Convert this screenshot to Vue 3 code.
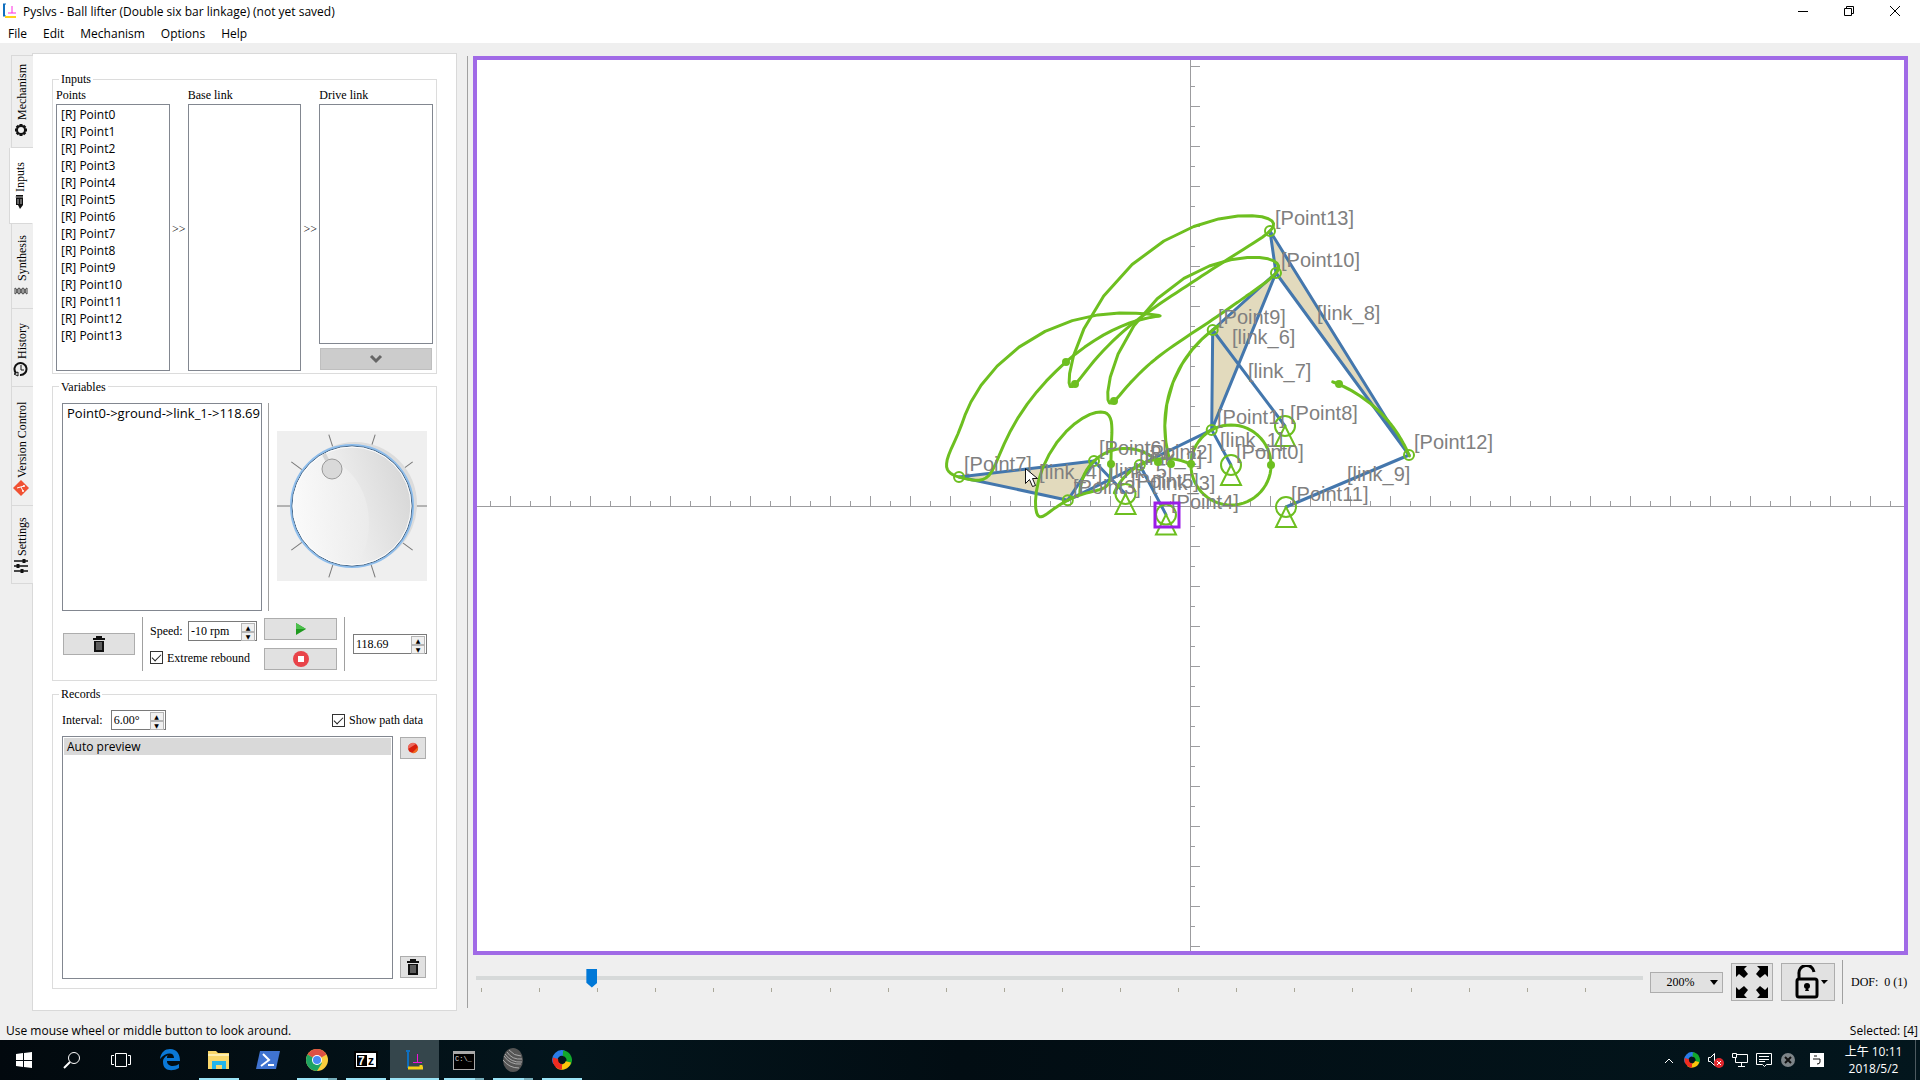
<script setup>
import { ref } from 'vue'

const menus = ['File', 'Edit', 'Mechanism', 'Options', 'Help']
const tabs = [
  { name: 'Mechanism', icon: 'gear', size: 93 },
  { name: 'Inputs', icon: 'pen', size: 76, active: true },
  { name: 'Synthesis', icon: 'dna', size: 85 },
  { name: 'History', icon: 'clock', size: 78 },
  { name: 'Version Control', icon: 'git', size: 119 },
  { name: 'Settings', icon: 'sliders', size: 78 },
]

const rebound = ref(true)
const showPath = ref(true)
const zoomLevel = ref(200)
const speed = ref('-10 rpm')
const angle = ref('118.69')
const interval = ref('6.00°')

const dialTicks = [0, 36, 72, 108, 144, 180, 216, 252, 288, 324]

/* ---- linkage ---- */
const points = [
  [1231, 465], [1211.7, 429.9], [1139.8, 465], [1067.8, 500.2], [1166, 514.6],
  [1125.5, 494], [1094, 461], [959, 477], [1285, 426], [1212.7, 330],
  [1276, 273], [1286, 507], [1409, 455], [1270, 231],
]
const fixed = [0, 4, 5, 8, 11]
const moving = [1, 2, 3, 6, 7, 9, 10, 12, 13]
const links = [
  [0, 1], [1, 2, 3], [2, 4], [3, 6, 7], [6, 5], [1, 9, 10], [9, 8], [10, 12, 13], [12, 11],
]
const linkShapes = links.map((ids, i) => {
  const c = ids.map((k) => points[k])
  return {
    name: `[link_${i + 1}]`,
    poly: c.map((p) => p.join(',')).join(' '),
    x: Math.round(c.reduce((s, p) => s + p[0], 0) / c.length),
    y: Math.round(c.reduce((s, p) => s + p[1], 0) / c.length),
  }
})

const dist = (a, b) => Math.hypot(a[0] - b[0], a[1] - b[1])
const side = (a, b, c) => Math.sign((b[0] - a[0]) * (c[1] - a[1]) - (b[1] - a[1]) * (c[0] - a[0]))

/* third joint of a two-bar chain a - c - b */
function dyad(pos, a, b, c) {
  const ra = dist(points[a], points[c])
  const rb = dist(points[b], points[c])
  const s = side(points[a], points[b], points[c])
  const [A, B] = [pos[a], pos[b]]
  const d = dist(A, B)
  const t = (ra * ra - rb * rb + d * d) / (2 * d)
  const h = Math.sqrt(Math.max(0, ra * ra - t * t))
  const ux = (B[0] - A[0]) / d
  const uy = (B[1] - A[1]) / d
  pos[c] = [A[0] + ux * t - uy * h * s, A[1] + uy * t + ux * h * s]
}

/* joint c carried by the rigid link through a and b */
function rigid(pos, a, b, c) {
  const [a0, b0, c0] = [points[a], points[b], points[c]]
  const turn =
    Math.atan2(pos[b][1] - pos[a][1], pos[b][0] - pos[a][0]) -
    Math.atan2(b0[1] - a0[1], b0[0] - a0[0])
  const x = c0[0] - a0[0]
  const y = c0[1] - a0[1]
  pos[c] = [
    pos[a][0] + x * Math.cos(turn) - y * Math.sin(turn),
    pos[a][1] + x * Math.sin(turn) + y * Math.cos(turn),
  ]
}

function solve(deg) {
  const pos = points.map((p) => [...p])
  const r = dist(points[0], points[1])
  const rad = (deg * Math.PI) / 180
  pos[1] = [pos[0][0] + r * Math.cos(rad), pos[0][1] - r * Math.sin(rad)]
  dyad(pos, 1, 4, 2)
  rigid(pos, 1, 2, 3)
  dyad(pos, 3, 5, 6)
  rigid(pos, 3, 6, 7)
  dyad(pos, 1, 8, 9)
  rigid(pos, 1, 9, 10)
  dyad(pos, 10, 11, 12)
  rigid(pos, 10, 12, 13)
  return pos
}
const frames = Array.from({ length: 61 }, (_, i) => solve(i * 6))
const paths = moving.map((k) => ({
  line: frames.map((f) => f[k].map((v) => v.toFixed(1)).join(',')).join(' '),
  start: frames[0][k].map(Math.round),
}))

const origin = [1190, 506]
const xTicks = Array.from({ length: 71 }, (_, i) => i - 35).filter((i) => i)
const yTicks = Array.from({ length: 45 }, (_, i) => i - 22).filter((i) => i)
</script>

<template>
  <div class="window">
    <header class="titlebar">
      <svg class="app-icon" width="16" height="16" viewBox="0 0 16 16">
        <path d="M2 1v12" stroke="#0f6fbf" stroke-width="2" /><path d="M1 1h3M1 13h3" stroke="#0f6fbf" />
        <path d="M3 14h11" stroke="#ffd21a" stroke-width="2" /><path d="M6 10h8M10 3v7" stroke="#ff2be0" fill="none" />
      </svg>
      <span class="title">Pyslvs - Ball lifter (Double six bar linkage) (not yet saved)</span>
      <button class="win" aria-label="Minimize"><svg width="10" height="10"><path d="M0 5.500h10" stroke="#000" /></svg></button>
      <button class="win" aria-label="Restore"><svg width="10" height="10" fill="none" stroke="#000"><path d="M.5 2.500h7v7h-7zM2.500 2.500v-2h7v7h-2" /></svg></button>
      <button class="win" aria-label="Close"><svg width="10" height="10" stroke="#000"><path d="M0 0l10 10M10 0L0 10" /></svg></button>
    </header>
    <nav class="menubar">
      <button v-for="m in menus" :key="m">{{ m }}</button>
    </nav>

    <main class="work">
      <div class="tabs" role="tablist">
        <button v-for="t in tabs" :key="t.name" class="tab" :class="{ active: t.active }" role="tab" :style="{ height: t.size + 'px' }">
          <svg width="16" height="16" viewBox="0 0 16 16">
            <g v-if="t.icon === 'gear'" fill="none" stroke="#111"><circle cx="8" cy="8" r="4" stroke-width="2" /><path d="M8 2v2M8 12v2M2 8h2M12 8h2M3.800 3.800l1.400 1.400M10.800 10.800l1.400 1.400M12.200 3.800l-1.400 1.400M5.200 10.800l-1.400 1.400" stroke-width="3" /></g>
            <g v-else-if="t.icon === 'pen'"><path d="M4 1h7v10l-3 4-2-4H4z" fill="#111" /><path d="M3 3h8M6 5v5M9 5v5" stroke="#bbb" /></g>
            <g v-else-if="t.icon === 'dna'" fill="none" stroke="#444"><path d="M2 5c2 0 2 6 4 6s2-6 4-6 2 6 4 6M2 11c2 0 2-6 4-6s2 6 4 6 2-6 4-6M2 5v6M6 5v6M10 5v6M14 5v6" /></g>
            <g v-else-if="t.icon === 'clock'" fill="none" stroke="#111"><path d="M3 12a6 6 0 1 1 4 2" stroke-width="2" /><path d="M8 4v5h3M1 13l4-2v4z" /></g>
            <g v-else-if="t.icon === 'git'"><path d="M8 0l8 8-8 8-8-8z" fill="#f05133" /><path d="M4 8l7-2M8 7l2 4" stroke="#fff" /><circle cx="11" cy="6" r="1" fill="#fff" /><circle cx="10" cy="11" r="1" fill="#fff" /></g>
            <g v-else stroke="#111" stroke-width="2"><path d="M1 3h14M1 8h14M1 13h14" stroke-width="1.500" /><path d="M11 1v4M5 6v4M9 11v4" stroke-width="3" /></g>
          </svg>
          <span>{{ t.name }}</span>
        </button>
      </div>

      <section class="panel">
        <fieldset class="group inputs">
          <legend>Inputs</legend>
          <div class="trio">
            <div class="col">
              <span>Points</span>
              <ul class="list fill"><li v-for="i in 14" :key="i">[R] Point{{ i - 1 }}</li></ul>
            </div>
            <span class="arrows">&gt;&gt;</span>
            <div class="col"><span>Base link</span><ul class="list fill"></ul></div>
            <span class="arrows">&gt;&gt;</span>
            <div class="col">
              <span>Drive link</span>
              <ul class="list fill"></ul>
              <button class="btn down" disabled aria-label="Add"><svg width="14" height="10"><path d="M2 2l5 5 5-5" fill="none" stroke="#666" stroke-width="3" /></svg></button>
            </div>
          </div>
        </fieldset>

        <fieldset class="group padded">
          <legend>Variables</legend>
          <div class="var-top">
            <ul class="list vars"><li>Point0-&gt;ground-&gt;link_1-&gt;118.69</li></ul>
            <i class="vline"></i>
            <div class="dial-wrap">
              <svg class="dial" width="150" height="150" viewBox="0 0 150 150">
                <defs>
                  <linearGradient id="knob" x1="0" y1=".6" x2="1" y2=".3"><stop offset="0" stop-color="#fff" /><stop offset="1" stop-color="#d6d6d6" /></linearGradient>
                  <linearGradient id="shine" x1="0" y1=".5" x2="1" y2=".5"><stop offset="0" stop-color="#fff" /><stop offset="1" stop-color="#ececec" /></linearGradient>
                  <clipPath id="face"><circle cx="75" cy="75" r="59" /></clipPath>
                </defs>
                <rect width="150" height="150" fill="#efefef" />
                <path v-for="a in dialTicks" :key="a" d="M137 75h13" stroke="#777" :transform="`rotate(${a} 75 75)`" />
                <circle cx="78" cy="73" r="62" fill="#dcdcdc" />
                <circle cx="75" cy="75" r="61" fill="url(#knob)" stroke="#8dbdec" stroke-width="2" />
                <circle cx="75" cy="75" r="60" fill="none" stroke="#46688a" />
                <ellipse cx="38" cy="92" rx="54" ry="66" fill="url(#shine)" clip-path="url(#face)" opacity=".8" />
                <circle cx="75" cy="75" r="59" fill="none" stroke="#fff" />
                <path d="M47 23l3 6" stroke="#d4d4d4" stroke-width="4" />
                <circle cx="55" cy="38" r="10" fill="#d9d9d9" stroke="#999" />
              </svg>
            </div>
          </div>
          <div class="var-bottom">
            <button class="btn trash" aria-label="Delete variable">
              <svg width="12" height="16" viewBox="0 0 12 16"><path d="M0 3h12M4 2V1h4v1" fill="none" stroke="#111" stroke-width="2" /><path d="M1 5h10v11H1z" fill="#111" /><path d="M4 6v8M6 6v8M8 6v8" stroke="#aaa" /></svg>
            </button>
            <i class="vline"></i>
            <div class="speed">
              <label for="speed">Speed:</label>
              <span class="spin w69"><input id="speed" v-model="speed" /><span class="steps"><button aria-label="Faster">▲</button><button aria-label="Slower">▼</button></span></span>
              <label class="check wide"><input v-model="rebound" type="checkbox" />Extreme rebound</label>
            </div>
            <div class="play">
              <button class="btn" aria-label="Play"><svg width="12" height="14"><path d="M1 1l10 6-10 6z" fill="#1e9a1e" /><path d="M1 1l10 6H1z" fill="#4cc04c" /></svg></button>
              <button class="btn" aria-label="Stop"><svg width="16" height="16"><circle cx="8" cy="8" r="8" fill="#e8444a" /><rect x="5" y="5" width="6" height="6" fill="#fff" /></svg></button>
            </div>
            <i class="vline"></i>
            <span class="spin w74"><input v-model="angle" aria-label="Angle" /><span class="steps"><button aria-label="Increase angle">▲</button><button aria-label="Decrease angle">▼</button></span></span>
          </div>
        </fieldset>

        <fieldset class="group padded">
          <legend>Records</legend>
          <div class="rec-head">
            <label for="interval">Interval:</label>
            <span class="spin w55"><input id="interval" v-model="interval" /><span class="steps"><button aria-label="Longer">▲</button><button aria-label="Shorter">▼</button></span></span>
            <label class="check end"><input v-model="showPath" type="checkbox" />Show path data</label>
          </div>
          <div class="rec-body">
            <ul class="list recs"><li class="selected">Auto preview</li></ul>
            <div class="rec-side">
              <button class="btn" aria-label="Record"><svg width="12" height="12"><circle cx="6" cy="6" r="5" fill="#d81f0c" /><path d="M1 7a5 5 0 0 1 8-5z" fill="#ec6a5e" /><path d="M5 11l6-6a5 5 0 0 1-6 6z" fill="#f06a20" /></svg></button>
              <button class="btn" aria-label="Delete record">
                <svg width="12" height="16" viewBox="0 0 12 16"><path d="M0 3h12M4 2V1h4v1" fill="none" stroke="#111" stroke-width="2" /><path d="M1 5h10v11H1z" fill="#111" /><path d="M4 6v8M6 6v8M8 6v8" stroke="#aaa" /></svg>
              </button>
            </div>
          </div>
        </fieldset>
      </section>

      <i class="splitter"></i>

      <section class="stage">
        <div class="canvas">
          <svg width="100%" height="100%" viewBox="477 60 1427 891">
            <g stroke="#9c9c9f" shape-rendering="crispEdges">
              <path :d="`M0 ${origin[1]}.5H2400M${origin[0]}.5 0V1400`" />
              <path v-for="i in xTicks" :key="'x' + i" :d="`M${origin[0] + i * 20}.5 ${origin[1]}v${i % 2 ? -5 : -10}`" />
              <path v-for="i in yTicks" :key="'y' + i" :d="`M${origin[0]} ${origin[1] + i * 20}.5h${i % 2 ? 5 : 10}`" />
            </g>
            <polygon v-for="l in linkShapes" :key="l.name" :points="l.poly" fill="#e2dabd" stroke="#4477ad" stroke-width="3" stroke-linejoin="round" />
            <g fill="none" stroke="#6dbf20" stroke-width="2">
              <polyline v-for="(p, i) in paths" :key="i" :points="p.line" class="trace" />
              <circle v-for="k in moving" :key="'m' + k" :cx="points[k][0]" :cy="points[k][1]" r="5" />
              <g v-for="k in fixed" :key="'f' + k" :transform="`translate(${points[k][0]} ${points[k][1]})`">
                <circle r="10" /><path d="M0 0l10 20h-20z" />
              </g>
            </g>
            <g class="labels">
              <text v-for="(p, k) in points" :key="k" :x="Math.round(p[0]) + 5" :y="Math.round(p[1]) - 6">[Point{{ k }}]</text>
              <text v-for="l in linkShapes" :key="l.name" :x="l.x - 1" :y="l.y">{{ l.name }}</text>
            </g>
            <circle v-for="(p, i) in paths" :key="i" :cx="p.start[0]" :cy="p.start[1]" r="4" fill="#6dbf20" />
            <rect x="1155" y="503" width="24" height="24" fill="none" stroke="#9b1de8" stroke-width="3" />
            <path d="M1025.500 468.500v15l4-4 3 7 3-1-3-7h5z" fill="#fff" stroke="#111" />
          </svg>
        </div>

        <div class="controls">
          <div class="slider">
            <input v-model="zoomLevel" type="range" min="10" max="2000" aria-label="Zoom" />
            <div class="marks"><i v-for="n in 20" :key="n"></i></div>
          </div>
          <span class="combo">
            <select aria-label="Zoom level"><option>200%</option></select>
            <svg width="8" height="5"><path d="M0 0h8L4 5z" /></svg>
          </span>
          <button class="btn tool fit" aria-label="Fit">
            <svg width="34" height="34" viewBox="0 0 34 34"><g v-for="a in [0, 90, 180, 270]" :key="a" :transform="`rotate(${a} 17 17)`"><path d="M1 1h11l-3 3 4 5-4 4-5-4-3 3z" /></g></svg>
          </button>
          <button class="btn tool lock" aria-label="Lock">
            <svg width="36" height="34" viewBox="0 0 36 34"><path d="M2 16q0-2 2-2h16q2 0 2 2v14q0 2-2 2H4q-2 0-2-2zM4 14V9a7 7 0 0 1 15-2" fill="none" stroke="#000" stroke-width="3" /><circle cx="12" cy="21" r="3" /><path d="M12 21l2 5h-4z" /><path d="M26 15h7l-4 4z" /></svg>
          </button>
          <i class="vline tall"></i>
          <span class="dof">DOF:&nbsp; 0 (1)</span>
        </div>
      </section>
    </main>

    <footer class="status"><span>Use mouse wheel or middle button to look around.</span><span>Selected: [4]</span></footer>

    <nav class="taskbar">
      <button class="task plain" aria-label="Start"><svg width="16" height="16" viewBox="0 0 16 16" fill="#fff"><path d="M0 2l7-1v7H0zM8 1l8-1v8H8zM0 9h7v6l-7-1zM8 9h8v7l-8-1z" /></svg></button>
      <button class="task plain" aria-label="Search"><svg width="18" height="18" fill="none" stroke="#fff"><circle cx="11" cy="7" r="5.500" /><path d="M7 11l-6 6" stroke-width="2" /></svg></button>
      <button class="task" aria-label="Task view"><svg width="20" height="16" fill="none" stroke="#fff"><path d="M4.500 1.500h11v13h-11zM3 3.500H.5v9H3M17 3.500h2.500v9H17" /></svg></button>
      <button class="task" aria-label="Edge"><svg width="20" height="22" viewBox="0 0 20 22"><path d="M0 10C1 3 5 0 10 0c7 0 10 5 10 12H7c0 6 8 6 12 3v4c-7 4-16 3-16-6 0-4 3-6 5-7-1 1-1 2-1 3h7c0-6-8-6-14 1z" fill="#0a78d7" /></svg></button>
      <button class="task on" aria-label="Explorer"><svg width="22" height="19" viewBox="0 0 22 19"><path d="M0 0h8l2 2h11v16H0z" fill="#f9d76b" /><path d="M0 4h21" stroke="#fdeeb0" stroke-width="2" /><path d="M4 18v-8h14v8h-4v-4H8v4z" fill="#25b5ea" /></svg></button>
      <button class="task" aria-label="PowerShell"><svg width="24" height="18" viewBox="0 0 24 18"><path d="M4 0h20l-4 18H0z" fill="#3f73d0" /><path d="M7 3l6 6-8 6M12 14h6" fill="none" stroke="#fff" stroke-width="2" /></svg></button>
      <button class="task on stack" aria-label="Chrome"><svg width="22" height="22" viewBox="-11 -11 22 22"><circle r="11" fill="#fbce3d" /><path d="M0 0L-9.500-5.500A11 11 0 0 1 9.500-5.500z" fill="#dd5144" /><path d="M0 0L-9.500-5.500A11 11 0 0 0 0 11L5 3z" fill="#1ea362" /><circle r="5" fill="#fff" /><circle r="4" fill="#4a8af4" /></svg></button>
      <button class="task on" aria-label="7-Zip"><svg width="24" height="18"><path d="M0 0h24v18H0z" fill="#000" /><path d="M2 2h20v14H2z" fill="#fff" /><path d="M3 4h10v11H3z" /><text x="4" y="14" font-family="Liberation Sans, sans-serif" font-weight="700" font-size="12" fill="#fff">7</text><text x="14" y="14" font-family="Liberation Sans, sans-serif" font-weight="700" font-size="12">z</text></svg></button>
      <button class="task on current" aria-label="Pyslvs"><svg width="20" height="22" viewBox="0 0 20 22"><path d="M3 1v18M1 2h4" stroke="#0f6fbf" stroke-width="2" fill="none" /><path d="M3 19h15M16 16v3" stroke="#f5cf18" stroke-width="3" fill="none" /><path d="M8 13.500h9M12.500 5v9" stroke="#f012d8" fill="none" /></svg></button>
      <button class="task on stack" aria-label="Command Prompt"><svg width="22" height="19"><path d="M0 0h22v19H0z" fill="#aaa" /><path d="M1 3h20v15H1z" fill="#000" /><text x="2" y="10" font-family="Liberation Mono, monospace" font-size="7" fill="#ddd">C:\_</text></svg></button>
      <button class="task on stack" aria-label="Sphere"><svg width="20" height="24" viewBox="0 0 20 24"><ellipse cx="10" cy="12" rx="10" ry="12" fill="#555" /><path d="M1 8q6 9 17 8M2 6q6 9 17 8M4 4q5 8 15 7M6 2q5 6 12 6M0 12q6 8 16 8" fill="none" stroke="#aaa" /></svg></button>
      <button class="task on" aria-label="ShareX"><svg width="20" height="22" viewBox="-11 -11 22 22" fill="none" stroke-width="6"><path d="M-7 3A7.500 7.500 0 0 1 3-7" stroke="#2a7de8" /><path d="M1-7.500A7.500 7.500 0 0 1 6 5" stroke="#12a82c" /><path d="M7 2A7.500 7.500 0 0 1-5 6" stroke="#fcc40c" /><path d="M0 7.500A7.500 7.500 0 0 1-7-2" stroke="#ee2c20" /></svg></button>

      <div class="tray">
        <svg width="14" height="10" fill="none" stroke="#fff"><path d="M3 8l4-4 4 4" /></svg>
        <svg width="16" height="16" viewBox="-11 -11 22 22" fill="none" stroke-width="6"><path d="M-7 3A7.500 7.500 0 0 1 3-7" stroke="#2a7de8" /><path d="M1-7.500A7.500 7.500 0 0 1 6 5" stroke="#12a82c" /><path d="M7 2A7.500 7.500 0 0 1-5 6" stroke="#fcc40c" /><path d="M0 7.500A7.500 7.500 0 0 1-7-2" stroke="#ee2c20" /></svg>
        <svg width="16" height="16"><path d="M.5 5.500h2l4-4v12l-4-4h-2z" fill="none" stroke="#fff" /><circle cx="11" cy="11" r="5" fill="#e0262c" /><path d="M9 9l4 4M13 9l-4 4" stroke="#fff" /></svg>
        <svg width="16" height="16" fill="none" stroke="#fff"><path d="M5 2.500h10.500v8H3.500V6M.5 1.500h4v4h-4zM9.500 11v3M6 14.500h7" /></svg>
        <svg width="16" height="16" fill="none" stroke="#fff"><path d="M.5 1.500h15v11h-5l-2 2-2-2h-6zM3 4.500h10M3 7.500h10M3 9.500h6" /></svg>
        <svg width="16" height="16"><circle cx="8" cy="8" r="7" fill="#7d8488" /><path d="M5 5l6 6M11 5l-6 6" stroke="#111" stroke-width="2" /></svg>
        <svg class="ime" width="14" height="14"><path d="M0 0h14v14H0z" fill="#fff" /><path d="M4 3h3M3 6h7v3q0 2-3 2" fill="none" stroke="#111" /></svg>
      </div>
      <div class="time"><span>上午 10:11</span><span>2018/5/2</span></div>
    </nav>
  </div>
</template>

<style>
body { margin: 0; }
</style>

<style scoped>
* { box-sizing: border-box; }
button, input, select { font: inherit; color: inherit; margin: 0; padding: 0; border: 0; background: none; border-radius: 0; }
svg { display: block; flex: none; }
ul { list-style: none; margin: 0; padding: 0; }

.window { display: flex; flex-direction: column; min-height: 100vh; background: #efefef; color: #000; font: 12px/16px 'Liberation Serif', serif; }
.titlebar { display: flex; align-items: center; height: 22px; padding: 0 2px; background: #fff; font: 12px/16px 'Open Sans', sans-serif; }
.title { flex: 1; padding: 2px 0 0 5px; }
.win { width: 46px; height: 20px; display: grid; place-items: center; }
.menubar { display: flex; gap: 16px; height: 21px; padding-left: 8px; background: #fff; font: 12px/24px 'Open Sans', sans-serif; }

.work { flex: 1; display: flex; padding: 10px 12px 7px 9px; }
.tabs { display: flex; flex-direction: column; align-items: flex-end; width: 24px; padding-top: 2px; }
.tab { display: flex; align-items: center; gap: 2px; width: 22px; padding: 9px 0 0 2px; writing-mode: vertical-rl; transform: rotate(180deg); border: 1px solid #d9d9d9; border-left: 0; background: #efefef; }
.tab + .tab { border-bottom: 0; }
.tab svg { transform: rotate(180deg); }
.tab.active { width: 24px; padding-top: 13px; background: #fff; border-left: 1px solid #fff; z-index: 1; }
.panel { display: grid; grid-template-rows: repeat(3, minmax(0, 1fr)); gap: 6px; width: 425px; padding: 18px 19px 21px; border: 1px solid #d9d9d9; background: #fff; margin-left: -1px; }
.group { display: flex; flex-direction: column; min-width: 0; margin: 0; padding: 1px 3px 2px; border: 1px solid #dcdcdc; }
.group legend { margin-left: 3px; padding: 0 2px; line-height: 14px; }
.group.padded { padding: 9px; }
.group.padded legend { margin-left: -3px; }
.trio { flex: 1; display: grid; grid-template-columns: 1fr 18px 1fr 18px 1fr; min-height: 0; }
.col { display: flex; flex-direction: column; }
.col span { padding-bottom: 1px; }
.arrows { align-self: center; text-align: center; }
.list { border: 1px solid #828790; background: #fff; padding: 1px; font: 12px/17px 'Open Sans', sans-serif; }
.fill { flex: 1; }
.list li { padding: 0 3px; height: 17px; white-space: nowrap; }
.selected { background: #d9d9d9; }
.btn { display: grid; place-items: center; height: 22px; border: 1px solid #adadad; background: #e1e1e1; }
.down { margin: 4px 1px 1px; background: #ccc; border-color: #bfbfbf; }
.vline { border-left: 1px solid #a0a0a0; align-self: stretch; }

.var-top { flex: 1; display: flex; gap: 6px; }
.vars { width: 200px; font-size: 13px; }
.dial-wrap { flex: 1; display: grid; place-items: center end; padding-bottom: 1px; }
.var-bottom { display: flex; align-items: center; gap: 7px; height: 54px; margin-top: 6px; }
.trash { width: 72px; margin-left: 1px; }
.speed { display: grid; grid-template-columns: 38px 69px; gap: 7px 0; align-items: center; }
.wide { grid-column: span 2; }
.play { display: flex; flex-direction: column; gap: 8px; width: 73px; }
.spin { display: flex; height: 20px; border: 1px solid #7a7a7a; background: #fff; }
.spin input { flex: 1; min-width: 0; padding-left: 2px; outline: 0; }
.steps { display: flex; flex-direction: column; width: 16px; padding: 1px; }
.steps button { flex: 1; font: 6px/7px 'DejaVu Sans', sans-serif; border: 1px solid #b5b5b5; background: #f0f0f0; }
.w69 { width: 69px; }
.w74 { width: 74px; margin-left: auto; }
.w55 { width: 55px; }
.check { display: flex; align-items: center; gap: 4px; height: 20px; }
.check input { appearance: none; width: 13px; height: 13px; border: 1px solid #333; background: #fff; display: grid; place-items: center; }
.check input:checked::after { content: ''; width: 8px; height: 4px; border: solid #222; border-width: 0 0 1px 1px; transform: translateY(-1px) rotate(-45deg); }
.rec-head { display: flex; align-items: center; gap: 8px; height: 20px; margin: 0 0 6px; }
.end { margin-left: auto; padding-right: 4px; }
.rec-body { flex: 1; display: flex; gap: 7px; }
.recs { flex: 1; }
.rec-side { display: flex; flex-direction: column; justify-content: space-between; width: 27px; padding: 1px 1px 1px 0; }

.splitter { width: 1px; margin: 3px 5px 3px 10px; background: #a0a0a0; }
.stage { flex: 1; min-width: 0; display: flex; flex-direction: column; padding-top: 3px; }
.canvas { flex: 1; min-height: 0; position: relative; border: 4px solid #a06ae6; background: #fff; }
.canvas svg { position: absolute; inset: 0; }
.labels { font: 20px 'Liberation Sans', sans-serif; fill: #808080; }
.trace { stroke-width: 3px; stroke-linejoin: round; }
.controls { display: flex; align-items: center; height: 54px; margin-bottom: 2px; padding-left: 3px; }
.slider { flex: 1; height: 28px; margin-right: 7px; }
.slider input { display: block; width: 100%; height: 20px; appearance: none; background: linear-gradient(#d6d9d9, #d6d9d9) center / 100% 4px no-repeat; }
.slider input::-webkit-slider-thumb { appearance: none; width: 11px; height: 19px; background: #0078d7; clip-path: polygon(0 0, 100% 0, 100% 75%, 50% 100%, 0 75%); }
.marks { display: flex; padding-left: 5px; height: 4px; }
.marks i { flex: 1; border-left: 1px solid #aaa89a; }
.combo { position: relative; margin-right: 8px; }
.combo select { display: block; width: 73px; height: 21px; padding-right: 12px; appearance: none; text-align: center; text-align-last: center; border: 1px solid #adadad; background: #e1e1e1; }
.combo svg { position: absolute; right: 5px; top: 8px; }
.tool { height: 38px; }
.fit { width: 42px; margin-right: 8px; }
.lock { width: 54px; padding-left: 10px; margin-right: 7px; }
.tall { height: 44px; align-self: center; }
.dof { width: 65px; padding-left: 8px; white-space: nowrap; }

.status { display: flex; justify-content: space-between; height: 22px; padding: 0 2px 0 6px; font: 12px/26px 'Open Sans', sans-serif; }
.taskbar { display: flex; height: 40px; background: linear-gradient(90deg, #02090e, #03151c 30%, #020d13 50%, #03161d); color: #fff; }
.task { position: relative; width: 49px; display: grid; place-items: center; }
.plain { width: 48px; }
.on::after { content: ''; position: absolute; left: 5px; right: 4px; bottom: 0; height: 2px; background: #9be4f7; }
.stack::after { background: linear-gradient(90deg, #9be4f7 31px, #76aebb 31px); }
.current { background: #35464c; }
.current::after { left: 0; right: 0; }
.tray { display: flex; align-items: center; gap: 8px; margin-left: auto; }
.ime { margin-left: 6px; }
.time { width: 84px; margin-left: 8px; margin-right: 4px; border-right: 1px solid #4d5a60; display: flex; flex-direction: column; align-items: center; justify-content: center; font: 12px/17px 'Open Sans', 'Noto Sans CJK TC', sans-serif; }
</style>
